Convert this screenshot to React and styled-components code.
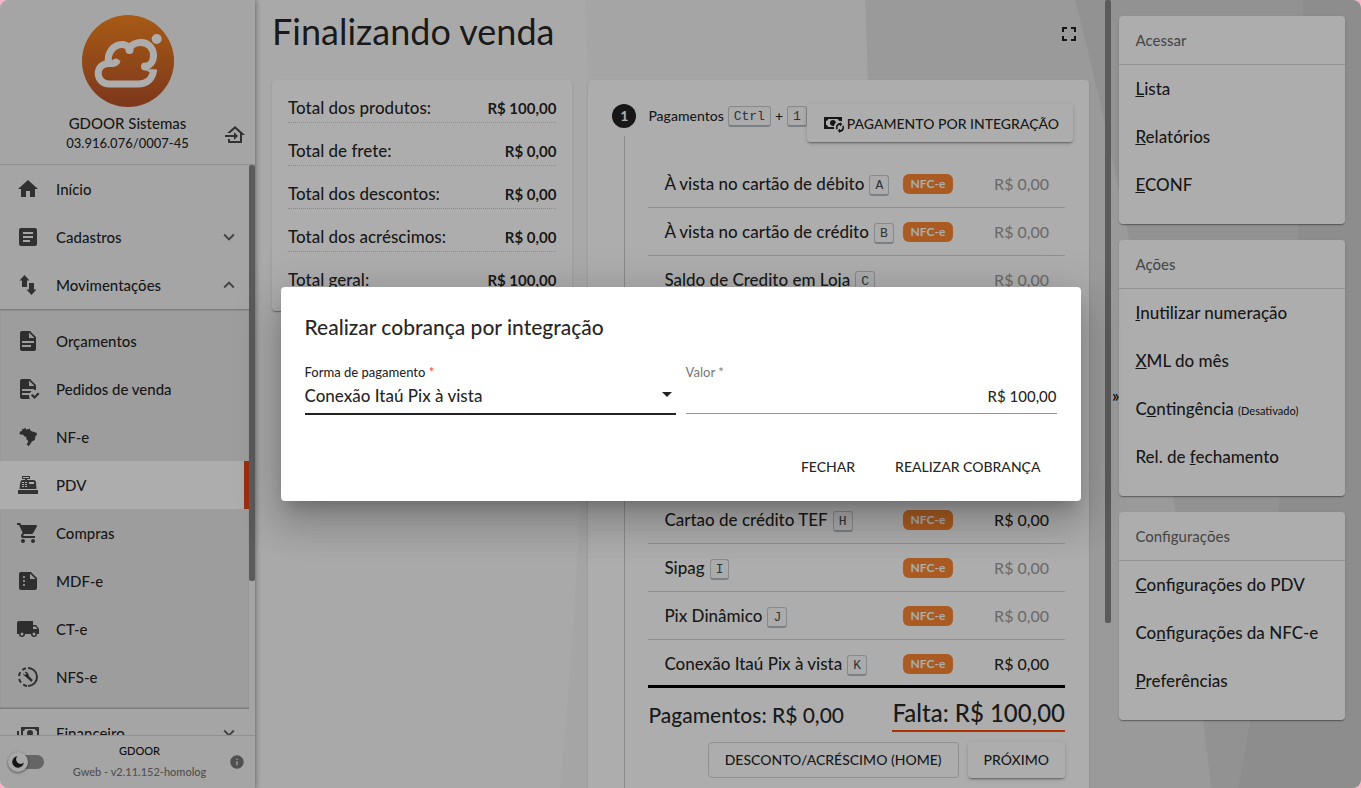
import React from "react";
import styled, { createGlobalStyle, css } from "styled-components";
import { MdSummarize, MdInfo, MdExpandMore, MdExpandLess } from "react-icons/md";

const Global = createGlobalStyle`
  * { box-sizing: border-box; }
  body {
    margin: 0;
    background: #ffb0c8;
    color: rgba(0, 0, 0, 0.87);
    font-family: Lato, "Open Sans", sans-serif;
    font-size: 17px;
    font-weight: 500;
  }
  button, input, select { font-family: inherit; font-weight: inherit; color: inherit; margin: 0; }
  ul { list-style: none; margin: 0; padding: 0; }
  h1, h2, h3, p { margin: 0; font-weight: inherit; }
`;

const shadow1 = "0 2px 1px -1px rgba(0,0,0,.2), 0 1px 1px rgba(0,0,0,.14), 0 1px 3px rgba(0,0,0,.12)";
const shadow2 = "0 3px 1px -2px rgba(0,0,0,.2), 0 2px 2px rgba(0,0,0,.14), 0 1px 5px rgba(0,0,0,.12)";

const Shell = styled.div`
  position: relative;
  display: flex;
  height: 100vh;
  overflow: hidden;
  border-radius: 8px;
  background: #fafafa;
`;

const Backdrop = styled.svg`
  position: absolute;
  inset: 0;
  width: 100%;
  height: 100%;
`;

/* Sidebar */
const Sidebar = styled.nav`
  position: relative;
  z-index: 1;
  flex: 0 0 255px;
  display: flex;
  flex-direction: column;
  background: #f4f4f4;
  box-shadow: 0 0 6px rgba(0, 0, 0, 0.5);
`;
const Company = styled.header`
  position: relative;
  display: flex;
  flex-direction: column;
  align-items: center;
  height: 165px;
  padding-top: 15px;
  border-bottom: 1px solid #d4d4d4;
`;
const CompanyName = styled.p`
  margin-top: 6px;
  font-size: 15px;
  line-height: 20px;
`;
const CompanyId = styled.p`
  font-size: 13px;
  line-height: 20px;
`;
const IconButton = styled.button`
  display: flex;
  align-items: center;
  padding: 0;
  border: 0;
  background: none;
`;
const SwitchCompany = styled(IconButton)`
  position: absolute;
  right: 8px;
  bottom: 17px;
  color: rgba(0, 0, 0, 0.7);
`;
const MenuScroll = styled.div`
  flex: 1;
  min-height: 0;
  display: flex;
  overflow: hidden;
`;
const Menu = styled.div`
  flex: 1;
`;
const MenuItem = styled.a`
  display: flex;
  align-items: center;
  gap: 16px;
  height: 48px;
  padding: 0 9px 0 16px;
  font-size: 15px;
  color: inherit;
  text-decoration: none;
  ${(p) => p.$active && css`
    background: #fff;
    border-right: 5px solid #e4471d;
  `}
  svg { color: rgba(0, 0, 0, 0.7); }
  span + svg { color: rgba(0, 0, 0, 0.6); }
`;
const MenuLabel = styled.span`
  flex: 1;
`;
const SubMenu = styled.div`
  padding: 8px 0;
  background: #e8e8e8;
  box-shadow: inset 0 2px 2px -1px rgba(0, 0, 0, 0.3), inset 0 -2px 2px -1px rgba(0, 0, 0, 0.3);
`;
const Track = styled.div`
  position: relative;
  flex: 0 0 6px;
`;
const Thumb = styled.div`
  height: ${(p) => p.$size};
  background: #878787;
  border-radius: 2px;
`;
const SideFooter = styled.footer`
  display: flex;
  align-items: center;
  justify-content: space-between;
  height: 53px;
  padding: 0 10px 0 8px;
  border-top: 1px solid #d4d4d4;
`;
const ThemeSwitch = styled.label`
  display: flex;
  align-items: center;
  width: 36px;
  height: 14px;
  border-radius: 7px;
  background: linear-gradient(90deg, transparent 8px, #969696 8px);
  input { position: absolute; opacity: 0; }
`;
const Knob = styled.span`
  flex: none;
  display: flex;
  align-items: center;
  justify-content: center;
  width: 20px;
  height: 20px;
  border-radius: 50%;
  background: #fafafa;
  box-shadow: 0 1px 3px rgba(0, 0, 0, 0.5);
`;
const Version = styled.div`
  padding: 0 0 3px 6px;
  text-align: center;
  color: #777;
  font-size: 11px;
  line-height: 21px;
  strong {
    display: block;
    color: #111;
    font-weight: inherit;
  }
`;

/* Main */
const Main = styled.main`
  position: relative;
  flex: 1;
  min-width: 0;
  display: flex;
`;
const Content = styled.div`
  flex: 1;
  min-width: 0;
  padding: 0 16px 0 17px;
`;
const PageHeader = styled.header`
  display: flex;
  align-items: flex-start;
  justify-content: space-between;
  height: 80px;
  padding-right: 8px;
`;
const PageTitle = styled.h1`
  font-size: 36px;
  font-weight: 400;
  line-height: 62px;
`;
const FullscreenButton = styled(IconButton)`
  height: 68px;
`;
const Columns = styled.div`
  display: grid;
  grid-template-columns: minmax(0, 3fr) minmax(0, 5fr);
  align-items: start;
  gap: 16px;
`;
const Card = styled.section`
  background: #fff;
  border-radius: 4px;
  box-shadow: ${shadow1};
`;
const TotalsCard = styled(Card)`
  padding: 16px 16px 0;
`;
const TotalLine = styled.div`
  display: flex;
  justify-content: space-between;
  margin-bottom: 16px;
  padding-bottom: 2px;
  border-bottom: 1px dotted ${(p) => (p.$last ? "transparent" : "#ccc")};
  line-height: 24px;
  strong { font-size: 15px; }
`;
const PaymentCard = styled(Card)`
  height: 760px;
`;
const StepHeader = styled.header`
  display: flex;
  align-items: flex-start;
  height: 56px;
  padding: 24px 16px 0 24px;
  font-size: 14px;
  line-height: 24px;
`;
const StepNumber = styled.span`
  width: 24px;
  height: 24px;
  margin-right: 12px;
  border-radius: 50%;
  background: #222;
  color: #fff;
  font-weight: 700;
  text-align: center;
`;
const StepKeys = styled.span`
  display: flex;
  align-items: center;
  gap: 4px;
  flex: 1;
  min-width: 0;
  white-space: nowrap;
`;
const Kbd = styled.kbd`
  padding: 2px 5px 0;
  border: 1px solid #c8ccd0;
  border-bottom: 2px solid #b4bcc2;
  border-radius: 3px;
  background: #fcfcfc;
  color: #444d56;
  font-family: "Liberation Mono", monospace;
  font-size: 13px;
  font-weight: 400;
  line-height: 16px;
`;
const StepBody = styled.div`
  margin: 0 24px 0 36px;
  height: 700px;
  padding: 24px 0 0 23px;
  border-left: 1px solid #ccc;
`;
const PaymentList = styled.ul`
  box-shadow: inset 0 -3px #000;
`;
const PaymentRow = styled.li`
  display: grid;
  grid-template-columns: 1fr 50px 96px;
  align-items: center;
  height: 48px;
  padding: 0 16px;
  border-bottom: 1px solid #d4d4d4;
  &:last-child { border-bottom-color: transparent; }
`;
const PaymentName = styled.span`
  grid-column: 1;
  display: flex;
  align-items: flex-end;
  gap: 5px;
  line-height: 24px;
  white-space: nowrap;
`;
const Badge = styled.span`
  grid-column: 2;
  border-radius: 6px;
  background: #fa8632;
  color: #fff;
  font-size: 12px;
  font-weight: 700;
  line-height: 20px;
  text-align: center;
`;
const Amount = styled.span`
  grid-column: 3;
  text-align: right;
  font-size: 16px;
  opacity: ${(p) => (p.$muted ? 0.45 : 1)};
`;
const Summary = styled.div`
  display: flex;
  align-items: flex-end;
  justify-content: space-between;
  height: 44px;
  font-size: 21px;
  line-height: 34px;
`;
const Missing = styled.strong`
  border-bottom: 2px solid #ff4b00;
  font-size: 24px;
  font-weight: inherit;
`;
const Button = styled.button`
  display: flex;
  align-items: center;
  justify-content: center;
  gap: 2px;
  height: 36px;
  padding: 0 16px 2px;
  border: ${(p) => (p.$kind === "outlined" ? "1px solid #d4d4d4" : "0")};
  border-radius: 4px;
  background: ${(p) => (p.$kind === "raised" ? "#fff" : "transparent")};
  box-shadow: ${(p) => (p.$kind === "raised" ? shadow2 : "none")};
  font-size: 14px;
  text-transform: uppercase;
  white-space: nowrap;
`;
const IntegrationButton = styled(Button)`
  height: 38px;
  padding: 0 14px;
`;
const StepActions = styled.div`
  display: flex;
  justify-content: flex-end;
  gap: 9px;
  margin-top: 10px;
`;

/* Right column */
const Aside = styled.aside`
  position: relative;
  flex: 0 0 250px;
  display: flex;
  align-items: flex-start;
  padding: 16px 16px 0 0;
`;
const Collapse = styled.button`
  align-self: center;
  flex: 0 0 8px;
  padding: 0 0 14px 1px;
  border: 0;
  background: none;
  color: #000;
  font-size: 17px;
`;
const Cards = styled.div`
  flex: 1;
  display: flex;
  flex-direction: column;
  gap: 16px;
`;
const ActionCard = styled(Card)`
  padding-bottom: 15px;
`;
const ActionTitle = styled.h3`
  height: 49px;
  padding: 0 16px;
  border-bottom: 1px solid #d8d8d8;
  color: rgba(0, 0, 0, 0.6);
  font-size: 15px;
  line-height: 48px;
`;
const ActionLink = styled.a`
  display: block;
  height: 48px;
  padding: 0 16px;
  color: inherit;
  line-height: 48px;
  text-decoration: none;
  white-space: nowrap;
  small { font-size: 11px; }
`;

/* Dialog */
const Overlay = styled.div`
  position: absolute;
  z-index: 2;
  inset: 0;
  display: flex;
  align-items: center;
  justify-content: center;
  background: rgba(0, 0, 0, 0.32);
`;
const Dialog = styled.form`
  width: 800px;
  max-width: 90%;
  padding: 24px 24px 16px;
  border-radius: 4px;
  background: #fff;
  box-shadow: 0 11px 15px -7px rgba(0,0,0,.2), 0 24px 38px 3px rgba(0,0,0,.14), 0 9px 46px 8px rgba(0,0,0,.12);
`;
const DialogTitle = styled.h2`
  font-size: 21px;
  line-height: 32px;
`;
const Fields = styled.div`
  display: grid;
  grid-template-columns: 1fr 1fr;
  gap: 10px;
  height: 72px;
  margin-top: 20px;
`;
const Field = styled.div`
  position: relative;
  display: flex;
  flex-direction: column;
  label {
    color: ${(p) => (p.$focused ? "rgba(0,0,0,.87)" : "rgba(0,0,0,.54)")};
    font-size: 13px;
    line-height: 18px;
  }
  label span { color: ${(p) => (p.$focused ? "#ff4b1e" : "inherit")}; }
  input, select {
    appearance: none;
    width: 100%;
    height: ${(p) => (p.$focused ? "34px" : "33px")};
    padding: 0 0 3px;
    border: 0;
    border-bottom: ${(p) => (p.$focused ? "2px solid #222" : "1px solid #949494")};
    border-radius: 0;
    outline: 0;
    background: none;
  }
  select { font-size: 17px; }
  input { font-size: 15px; text-align: right; }
  svg {
    position: absolute;
    right: 4px;
    top: 29px;
    pointer-events: none;
  }
`;
const DialogActions = styled.div`
  display: flex;
  justify-content: flex-end;
  gap: 8px;
  margin-top: 14px;
`;

const PATHS = {
  home: "M10,20V14H14V20H19V12H22L12,3L2,12H5V20H10Z",
  text: "M14,17H7V15H14M17,13H7V11H17M17,9H7V7H17M19,3H5C3.89,3 3,3.89 3,5V19A2,2 0 0,0 5,21H19A2,2 0 0,0 21,19V5C21,3.89 20.1,3 19,3Z",
  swap: "M8.5 2L3.5 7.5H6V14H11V7.5H13.5ZM13 10H18V16.5H20.5L15.5 22L10.5 16.5H13Z",
  doc: "M13,9H18.5L13,3.5V9M6,2H14L20,8V20A2,2 0 0,1 18,22H6C4.89,22 4,21.1 4,20V4C4,2.89 4.89,2 6,2M15,18V16H6V18H15M18,14V12H6V14H18Z",
  docCheck: "M23.5 17L18.5 22L15 18.5L16.5 17L18.5 19L22 15.5L23.5 17M6 2C4.89 2 4 2.9 4 4V20C4 21.11 4.89 22 6 22H13.81C13.28 21.09 13 20.05 13 19C13 18.67 13.03 18.33 13.08 18H6V16H13.81C14.27 15.2 14.91 14.5 15.68 14H6V12H18V13.08C18.33 13.03 18.67 13 19 13C19.34 13 19.67 13.03 20 13.08V8L14 2M13 3.5L18.5 9H13Z",
  brazil: "M4.5 6.2L6.3 5.8L6 3.8L7.8 4L9.3 2.8L10.2 4.5L13 3.9L13.6 3.2L14.5 5.4L16.2 6.4L18.6 7L21 8.2L20.8 9.8L19.3 11.6L19 14.5L18 15.6L16 16.3L14.7 18.6L12.6 21.2L10.6 19.2L12.2 17L11.8 15.4L10.6 14.4L10.2 12L7.8 11L7 9.6L4.8 9.8L3.2 8.2Z",
  register: "M2,17H22V21H2V17M6.25,7H9V6H6V3H14V6H11V7H17.8C18.8,7 19.8,8 20,9L20.5,16H3.5C4.05,10.4 4.5,7 6.25,7M13,9V11H18V9H13M6,9V10H8V9H6M9,9V10H11V9H9M6,11V12H8V11H6M9,11V12H11V11H9M6,13V14H8V13H6M9,13V14H11V13H9M7,4V5H13V4H7Z",
  cart: "M17,18C15.89,18 15,18.89 15,20A2,2 0 0,0 17,22A2,2 0 0,0 19,20C19,18.89 18.1,18 17,18M1,2V4H3L6.6,11.59L5.24,14.04C5.09,14.32 5,14.65 5,15A2,2 0 0,0 7,17H19V15H7.42A0.25,0.25 0 0,1 7.17,14.75C7.17,14.7 7.18,14.66 7.2,14.63L8.1,13H15.55C16.3,13 16.96,12.58 17.3,11.97L20.88,5.5C20.95,5.34 21,5.17 21,5A1,1 0 0,0 20,4H5.21L4.27,2M7,18C5.89,18 5,18.89 5,20A2,2 0 0,0 7,22A2,2 0 0,0 9,20C9,18.89 8.1,18 7,18Z",
  truck: "M18,18.5A1.5,1.5 0 0,1 16.5,17A1.5,1.5 0 0,1 18,15.5A1.5,1.5 0 0,1 19.5,17A1.5,1.5 0 0,1 18,18.5M19.5,9.5L21.46,12H17V9.5M6,18.5A1.5,1.5 0 0,1 4.5,17A1.5,1.5 0 0,1 6,15.5A1.5,1.5 0 0,1 7.5,17A1.5,1.5 0 0,1 6,18.5M20,8H17V4H3C1.89,4 1,4.89 1,6V17H3A3,3 0 0,0 6,20A3,3 0 0,0 9,17H15A3,3 0 0,0 18,20A3,3 0 0,0 21,17H23V12L20,8Z",
  cash: "M5,6H23V18H5V6M14,9A3,3 0 0,1 17,12A3,3 0 0,1 14,15A3,3 0 0,1 11,12A3,3 0 0,1 14,9M9,8A2,2 0 0,1 7,10V14A2,2 0 0,1 9,16H19A2,2 0 0,1 21,14V10A2,2 0 0,1 19,8H9M1,10H3V20H19V22H1V10Z",
  homeImport: "M15 13L11 9V12H2V14H11V17M5 20V16H7V18H17V10.19L12 5.69L7.21 10H4.22L12 3L22 12H19V20H5Z",
  cashSync: "M3 6V18H13.32C13.1 17.33 13 16.66 13 16H7C7 14.9 6.11 14 5 14V10C6.11 10 7 9.11 7 8H17C17 9.11 17.9 10 19 10V10.06C19.67 10.06 20.34 10.18 21 10.4V6H3M12 9C10.3 9.03 9 10.3 9 12C9 13.7 10.3 14.94 12 15C12.38 15 12.77 14.92 13.14 14.77C13.41 13.67 13.86 12.63 14.97 11.61C14.85 10.28 13.59 8.97 12 9M19 11L21.25 13.25L19 15.5V14C17.15 14 15.94 16.03 16.76 17.67L15.67 18.76C13.71 15.91 15.76 12 19 12V11M19 22L16.75 19.75L19 17.5V19C20.85 19 22.06 16.97 21.24 15.33L22.33 14.24C24.29 17.09 22.24 21 19 21V22",
  fullscreen: "M5,5H10V7H7V10H5V5M14,5H19V10H17V7H14V5M17,14H19V19H14V17H17V14M10,17V19H5V14H7V17H10Z",
  moon: "M11 2A10 10 0 1 0 22 13A7 7 0 0 1 11 2Z",
};

function Icon({ name, size = 24 }) {
  return (
    <svg width={size} height={size} viewBox="0 0 24 24" fill="currentColor" fillRule="evenodd" aria-hidden="true">
      <path d={PATHS[name]} />
    </svg>
  );
}

function ServiceIcon() {
  return (
    <svg width="24" height="24" viewBox="0 0 24 24" fill="none" stroke="currentColor" aria-hidden="true">
      <path d="M12 3A9 9 0 0 1 12 21" strokeWidth="2" />
      <path d="M12 21A9 9 0 0 1 12 3" strokeWidth="2" strokeDasharray="4 3" strokeDashoffset="-1" />
      <path d="M10.5 10.5L16 16" strokeWidth="2.500" />
      <path d="M7.2 8.2L9 10L10.3 8.7L8.5 6.9A3.2 3.2 0 0 1 12.4 11A3.2 3.2 0 0 1 7.2 8.2Z" fill="currentColor" stroke="none" />
    </svg>
  );
}

function Logo() {
  return (
    <svg width="92" height="92" viewBox="0 0 92 92" role="img" aria-label="GDOOR">
      <defs>
        <linearGradient id="logo" x1="0" y1="0" x2="0" y2="1">
          <stop offset="0" stopColor="#f78620" />
          <stop offset="1" stopColor="#b85229" />
        </linearGradient>
      </defs>
      <circle cx="46" cy="46" r="46" fill="url(#logo)" />
      <g fill="none" stroke="#fff" strokeWidth="7">
        <path d="M35 45C34.5 48.6 31 48.6 27 48.6C20 48.6 16.2 53 16.2 58.6C16.2 64.5 21 69 27 69H56C65 69 71 63.500 71.500 54.500" />
        <path d="M26.600 48C24.500 37.500 32 29.500 40 29.500C43.500 29.500 45.500 31 47 33C50 29.500 54 27.500 59 27.500C67 27.500 71.500 34 71.500 40.500C71.500 47 67.500 51 63 52" />
      </g>
      <g fill="#fff">
        <path d="M63 54.500H75V57H67Z" />
        <circle cx="63" cy="51.500" r="4" />
        <circle cx="47.500" cy="35" r="4" />
        <circle cx="34" cy="46.500" r="3" />
        <circle cx="74.700" cy="24" r="5" />
      </g>
    </svg>
  );
}

const topMenu = [
  { label: "Início", icon: <Icon name="home" /> },
  { label: "Cadastros", icon: <Icon name="text" />, arrow: <MdExpandMore size={22} /> },
  { label: "Movimentações", icon: <Icon name="swap" />, arrow: <MdExpandLess size={22} /> },
];
const subMenu = [
  { label: "Orçamentos", icon: <Icon name="doc" /> },
  { label: "Pedidos de venda", icon: <Icon name="docCheck" /> },
  { label: "NF-e", icon: <Icon name="brazil" /> },
  { label: "PDV", icon: <Icon name="register" />, active: true },
  { label: "Compras", icon: <Icon name="cart" /> },
  { label: "MDF-e", icon: <MdSummarize size={24} /> },
  { label: "CT-e", icon: <Icon name="truck" /> },
  { label: "NFS-e", icon: <ServiceIcon /> },
];
const totals = [
  ["Total dos produtos:", "R$ 100,00"],
  ["Total de frete:", "R$ 0,00"],
  ["Total dos descontos:", "R$ 0,00"],
  ["Total dos acréscimos:", "R$ 0,00"],
  ["Total geral:", "R$ 100,00"],
];
const payments = [
  { shortcut: "A", name: "À vista no cartão de débito", nfce: true, muted: true },
  { shortcut: "B", name: "À vista no cartão de crédito", nfce: true, muted: true },
  { shortcut: "C", name: "Saldo de Credito em Loja", muted: true },
  { shortcut: "D" },
  { shortcut: "E" },
  { shortcut: "F" },
  { shortcut: "G" },
  { shortcut: "H", name: "Cartao de crédito TEF", nfce: true },
  { shortcut: "I", name: "Sipag", nfce: true, muted: true },
  { shortcut: "J", name: "Pix Dinâmico", nfce: true, muted: true },
  { shortcut: "K", name: "Conexão Itaú Pix à vista", nfce: true },
];

function Item({ label, icon, arrow, active }) {
  return (
    <MenuItem href="#" $active={active} aria-current={active ? "page" : undefined}>
      {icon}
      <MenuLabel>{label}</MenuLabel>
      {arrow}
    </MenuItem>
  );
}

/* A shortcut with no payment method assigned keeps its slot empty. */
function Payment({ shortcut, name, nfce, muted }) {
  return (
    <PaymentRow>
      {name && <PaymentName>{name} <Kbd>{shortcut}</Kbd></PaymentName>}
      {nfce && <Badge>NFC-e</Badge>}
      {name && <Amount $muted={muted}>R$ 0,00</Amount>}
    </PaymentRow>
  );
}

export default function App() {
  return (
    <Shell>
      <Global />
      <Backdrop viewBox="0 0 1361 788" preserveAspectRatio="none" aria-hidden="true">
        <path d="M585 0Q600 340 560 788H1361V0Z" fill="#f4f4f4" />
        <path d="M865 0Q880 340 850 788H1361V0Z" fill="#e4e4e4" />
        <path d="M1075 0Q1160 329 1211 788H1361V0Z" fill="#d8d8d8" />
        <path d="M1303 0Q1303 450 1238 788H1361V0Z" fill="#d0d0d0" />
      </Backdrop>

      <Sidebar>
        <Company>
          <Logo />
          <CompanyName>GDOOR Sistemas</CompanyName>
          <CompanyId>03.916.076/0007-45</CompanyId>
          <SwitchCompany aria-label="Trocar empresa"><Icon name="homeImport" /></SwitchCompany>
        </Company>
        <MenuScroll>
          <Menu>
            {topMenu.map((m) => <Item key={m.label} {...m} />)}
            <SubMenu>{subMenu.map((m) => <Item key={m.label} {...m} />)}</SubMenu>
            <Item label="Financeiro" icon={<Icon name="cash" />} arrow={<MdExpandMore size={22} />} />
          </Menu>
          <Track><Thumb $size="73%" /></Track>
        </MenuScroll>
        <SideFooter>
          <ThemeSwitch>
            <input type="checkbox" role="switch" aria-label="Tema escuro" />
            <Knob><Icon name="moon" size={14} /></Knob>
          </ThemeSwitch>
          <Version><strong>GDOOR</strong>Gweb - v2.11.152-homolog</Version>
          <MdInfo size={16} color="#777" />
        </SideFooter>
      </Sidebar>

      <Main>
        <Content>
          <PageHeader>
            <PageTitle>Finalizando venda</PageTitle>
            <FullscreenButton aria-label="Tela cheia"><Icon name="fullscreen" /></FullscreenButton>
          </PageHeader>
          <Columns>
            <TotalsCard>
              {totals.map(([label, value], i) => (
                <TotalLine key={label} $last={i === totals.length - 1}>
                  <span>{label}</span>
                  <strong>{value}</strong>
                </TotalLine>
              ))}
            </TotalsCard>
            <PaymentCard>
              <StepHeader>
                <StepNumber>1</StepNumber>
                <StepKeys>Pagamentos <Kbd>Ctrl</Kbd>+<Kbd>1</Kbd></StepKeys>
                <IntegrationButton $kind="raised"><Icon name="cashSync" />Pagamento por integração</IntegrationButton>
              </StepHeader>
              <StepBody>
                <PaymentList>
                  {payments.map((p) => <Payment key={p.shortcut} {...p} />)}
                </PaymentList>
                <Summary>
                  <span>Pagamentos: R$ 0,00</span>
                  <Missing>Falta: R$ 100,00</Missing>
                </Summary>
                <StepActions>
                  <Button $kind="outlined">Desconto/acréscimo (Home)</Button>
                  <Button $kind="raised">Próximo</Button>
                </StepActions>
              </StepBody>
            </PaymentCard>
          </Columns>
        </Content>
        <Track><Thumb $size="79%" /></Track>
      </Main>

      <Aside>
        <Collapse aria-label="Recolher painel">»</Collapse>
        <Cards>
          <ActionCard>
            <ActionTitle>Acessar</ActionTitle>
            <ActionLink href="#"><u>L</u>ista</ActionLink>
            <ActionLink href="#"><u>R</u>elatórios</ActionLink>
            <ActionLink href="#"><u>E</u>CONF</ActionLink>
          </ActionCard>
          <ActionCard>
            <ActionTitle>Ações</ActionTitle>
            <ActionLink href="#"><u>I</u>nutilizar numeração</ActionLink>
            <ActionLink href="#"><u>X</u>ML do mês</ActionLink>
            <ActionLink href="#">C<u>o</u>ntingência <small>(Desativado)</small></ActionLink>
            <ActionLink href="#">Rel. de <u>f</u>echamento</ActionLink>
          </ActionCard>
          <ActionCard>
            <ActionTitle>Configurações</ActionTitle>
            <ActionLink href="#"><u>C</u>onfigurações do PDV</ActionLink>
            <ActionLink href="#">Co<u>n</u>figurações da NFC-e</ActionLink>
            <ActionLink href="#"><u>P</u>referências</ActionLink>
          </ActionCard>
        </Cards>
      </Aside>

      <Overlay>
        <Dialog role="dialog" aria-labelledby="dialog-title">
          <DialogTitle id="dialog-title">Realizar cobrança por integração</DialogTitle>
          <Fields>
            <Field $focused>
              <label htmlFor="method">Forma de pagamento <span>*</span></label>
              <select id="method" defaultValue="itau">
                <option value="itau">Conexão Itaú Pix à vista</option>
              </select>
              <svg width="10" height="5" viewBox="0 0 10 5" aria-hidden="true"><path d="M0 0H10L5 5Z" fill="#222" /></svg>
            </Field>
            <Field>
              <label htmlFor="amount">Valor <span>*</span></label>
              <input id="amount" type="text" defaultValue="R$ 100,00" />
            </Field>
          </Fields>
          <DialogActions>
            <Button type="button">Fechar</Button>
            <Button type="button">Realizar cobrança</Button>
          </DialogActions>
        </Dialog>
      </Overlay>
    </Shell>
  );
}
